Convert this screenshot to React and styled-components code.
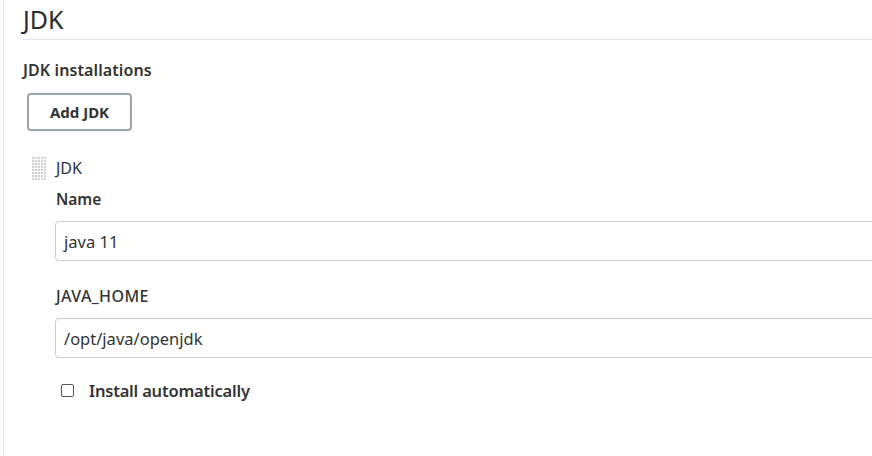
import React from "react";
import styled, { createGlobalStyle } from "styled-components";

const Global = createGlobalStyle`
  html, body { margin: 0; padding: 0; background: #fff; }
  body { font-family: "Noto Sans", "Open Sans", sans-serif; color: #333; overflow: hidden; }
  * { box-sizing: border-box; }
`;

const Page = styled.div`
  width: 872px;
  height: 456px;
  display: flex;
  overflow: hidden;
  background: #fff;
`;

const Rail = styled.div`
  width: 4px;
  flex: none;
  border-right: 1px solid #ececec;
`;

const Main = styled.div`
  flex: 1;
  padding-left: 19px;
  min-width: 0;
`;

const Heading = styled.h1`
  margin: 0;
  font-size: 25px;
  font-weight: 400;
  line-height: 39px;
  height: 40px;
  color: #2b2b2b;
  border-bottom: 1px solid #e2e2e2;
`;

const SectionTitle = styled.div`
  font-size: 16px;
  font-weight: 600;
  margin-top: 18px;
  line-height: 24px;
  letter-spacing: 0.1px;
`;

const AddButton = styled.button`
  display: block;
  margin: 11px 0 0 4px;
  width: 105px;
  height: 38px;
  border: 2px solid #9ca3aa;
  border-radius: 4px;
  background: #fff;
  font-family: inherit;
  font-size: 15px;
  font-weight: 700;
  color: #333;
  padding: 0;
`;

const Item = styled.div`
  display: grid;
  grid-template-columns: 24px 1fr;
  margin-top: 25px;
  margin-left: 9px;
`;

const Handle = styled.svg`
  display: block;
  margin-top: 1px;
`;

const ItemBody = styled.div`
  display: flex;
  flex-direction: column;
`;

const ItemTitle = styled.div`
  font-size: 16px;
  line-height: 24px;
  color: #2a3147;
`;

const FieldLabel = styled.div`
  font-size: ${p => (p.$strong ? 15.5 : 16)}px;
  font-weight: ${p => (p.$strong ? 600 : 500)};
  line-height: 20px;
  margin-top: ${p => p.$top}px;
  color: #333;
  letter-spacing: ${p => (p.$strong ? 0 : 0.4)}px;
`;

const Input = styled.div`
  margin-top: 12px;
  margin-left: -1px;
  height: 40px;
  width: 850px;
  border: 1px solid #cccccc;
  border-radius: 4px;
  display: flex;
  align-items: center;
  padding-left: 8px;
  font-size: 16.5px;
  color: #333;
`;

const CheckRow = styled.label`
  display: flex;
  align-items: center;
  margin-top: 21px;
  margin-left: 5px;
  gap: 15px;
  font-size: 16.5px;
  font-weight: 600;
  letter-spacing: -0.2px;
`;

const Box = styled.span`
  width: 13px;
  height: 13px;
  border: 1px solid #555;
  border-radius: 2px;
  flex: none;
`;

function DragHandle() {
  const dots = [];
  for (let r = 0; r < 8; r++) {
    for (let c = 0; c < 5; c++) {
      dots.push(<rect key={`${r}-${c}`} x={c * 3} y={r * 3} width="2" height="2" fill="#cfcfcf" />);
    }
  }
  return (
    <Handle width="15" height="25" viewBox="0 0 15 25">
      {dots}
    </Handle>
  );
}

export default function App() {
  return (
    <Page>
      <Global />
      <Rail />
      <Main>
        <Heading>JDK</Heading>
        <SectionTitle>JDK installations</SectionTitle>
        <AddButton>Add JDK</AddButton>
        <Item>
          <DragHandle />
          <ItemBody>
            <ItemTitle>JDK</ItemTitle>
            <FieldLabel $strong $top={9}>Name</FieldLabel>
            <Input>java 11</Input>
            <FieldLabel $top={25}>JAVA_HOME</FieldLabel>
            <Input>/opt/java/openjdk</Input>
            <CheckRow>
              <Box />
              Install automatically
            </CheckRow>
          </ItemBody>
        </Item>
      </Main>
    </Page>
  );
}
